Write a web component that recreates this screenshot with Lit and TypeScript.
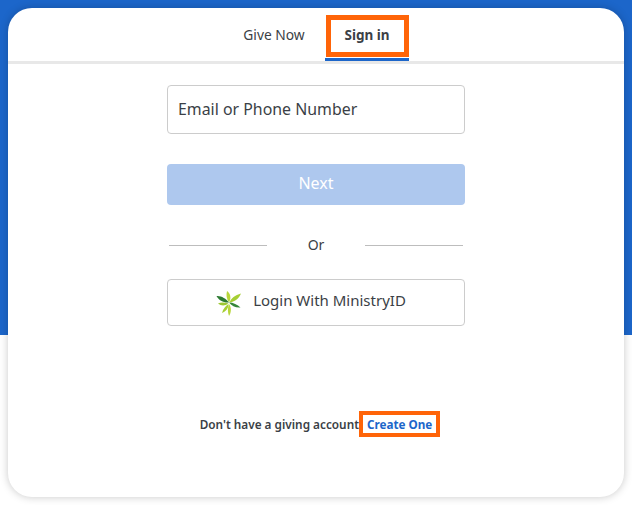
import { LitElement, html, css } from "lit";
import { customElement } from "lit/decorators.js";

@customElement("app-root")
export class AppRoot extends LitElement {
  static styles = css`
    :host {
      display: block;
      width: 632px;
      height: 505px;
      box-sizing: border-box;
      padding: 8px;
      background: linear-gradient(#1c66ca 335px, #fff 335px);
      font-family: "Noto Sans", "Open Sans", sans-serif;
      color: #3b3f46;
    }
    .card {
      height: 489px;
      box-sizing: border-box;
      background: #fff;
      border-radius: 24px;
      box-shadow: 0 0 8px rgba(0, 0, 0, 0.22);
      display: flex;
      flex-direction: column;
      align-items: center;
    }
    .tabs {
      align-self: stretch;
      height: 53px;
      border-bottom: 3px solid #e8e8e8;
      display: flex;
      justify-content: center;
      gap: 20px;
      padding-left: 20px;
      flex: none;
    }
    .tab {
      font-size: 14px;
      white-space: nowrap;
      display: flex;
      align-items: center;
      justify-content: center;
      box-sizing: border-box;
      height: 53px;
    }
    .tab.give { width: 62px; padding-bottom: 1px; font-size: 13.8px; }
    .tab.sign {
      width: 84px;
      font-size: 13.5px;
      font-weight: 700;
      border-bottom: 3px solid #1c66ca;
      padding-top: 3px;
      position: relative;
    }
    .ring {
      position: absolute;
      left: 1px;
      right: 0;
      top: 7px;
      height: 42px;
      border: 5px solid #ff6408;
      box-sizing: border-box;
    }
    .form {
      width: 298px;
      display: flex;
      flex-direction: column;
      margin-top: 21px;
    }
    .input {
      height: 49px;
      box-sizing: border-box;
      border: 1px solid #cccccc;
      border-radius: 4px;
      display: flex;
      align-items: center;
      padding: 0 10px 1px;
      font-size: 15.9px;
    }
    .next {
      margin-top: 30px;
      height: 41px;
      border-radius: 4px;
      background: #aec8ee;
      color: #fff;
      font-size: 16px;
      padding-bottom: 4px;
      box-sizing: border-box;
      display: flex;
      align-items: center;
      justify-content: center;
    }
    .or {
      margin-top: 30px;
      height: 20px;
      box-sizing: border-box;
      display: flex;
      align-items: center;
      justify-content: space-between;
      padding: 0 2px;
      font-size: 14px;
    }
    .or span { margin-top: -2px; }
    .or i {
      display: block;
      width: 98px;
      height: 1px;
      background: #bdbdbd;
    }
    .ministry {
      margin-top: 24px;
      height: 47px;
      box-sizing: border-box;
      border: 1px solid #cccccc;
      border-radius: 4px;
      display: flex;
      align-items: center;
      justify-content: center;
      gap: 11px;
      font-size: 15px;
      padding: 0 10px 6px 0;
    }
    .ministry svg { width: 26px; height: 26px; flex: none; margin-top: 6px; }
    .foot {
      margin-top: 85px;
      display: flex;
      align-items: center;
      font-size: 11.8px;
      font-weight: 600;
      padding-left: 8px;
    }
    .link {
      color: #1c66ca;
      font-size: 11.7px;
      font-weight: 700;
      border: 4px solid #ff6408;
      padding: 1px 4px;
      line-height: 16px;
    }
  `;

  render() {
    return html`
      <div class="card">
        <div class="tabs">
          <div class="tab give">Give Now</div>
          <div class="tab sign">Sign in<span class="ring"></span></div>
        </div>
        <div class="form">
          <div class="input">Email or Phone Number</div>
          <div class="next">Next</div>
          <div class="or"><i></i><span>Or</span><i></i></div>
          <div class="ministry">
            <svg viewBox="0 0 26 26">
              <path d="M13 12.500 C10.500 9 10 5 11 1 C14.500 3.500 15.500 8 13 12.500Z" fill="#b8d63a"/>
              <path d="M13.500 12.500 C15 8.500 19 5 25 3.500 C23 8.500 18.500 12 13.500 12.500Z" fill="#a6cf34"/>
              <path d="M13 14 C11.500 18 11.500 22 13 26 C15.500 22 15.500 17.500 13 14Z" fill="#b8d63a"/>
              <path d="M12.500 14 C10 15.500 7 19 6 23 C10 21.500 12.500 18 12.500 14Z" fill="#a6cf34"/>
              <path d="M0.500 6 C5 5.500 10 8.500 13 12.500 C7.500 13 3 10.500 0.500 6Z" fill="#2c7a32"/>
              <path d="M2 13.500 C5 12 9 12.500 12.500 13.500 C9 16 5 16 2 13.500Z" fill="#9cc832"/>
              <path d="M13 12.500 C17 12.500 21.500 14.500 24.500 17.500 C20 18 15.500 16 13 12.500Z" fill="#35863a"/>
            </svg>
            <span>Login With MinistryID</span>
          </div>
        </div>
        <div class="foot">
          <span>Don't have a giving account</span>
          <span class="link">Create One</span>
        </div>
      </div>
    `;
  }
}
